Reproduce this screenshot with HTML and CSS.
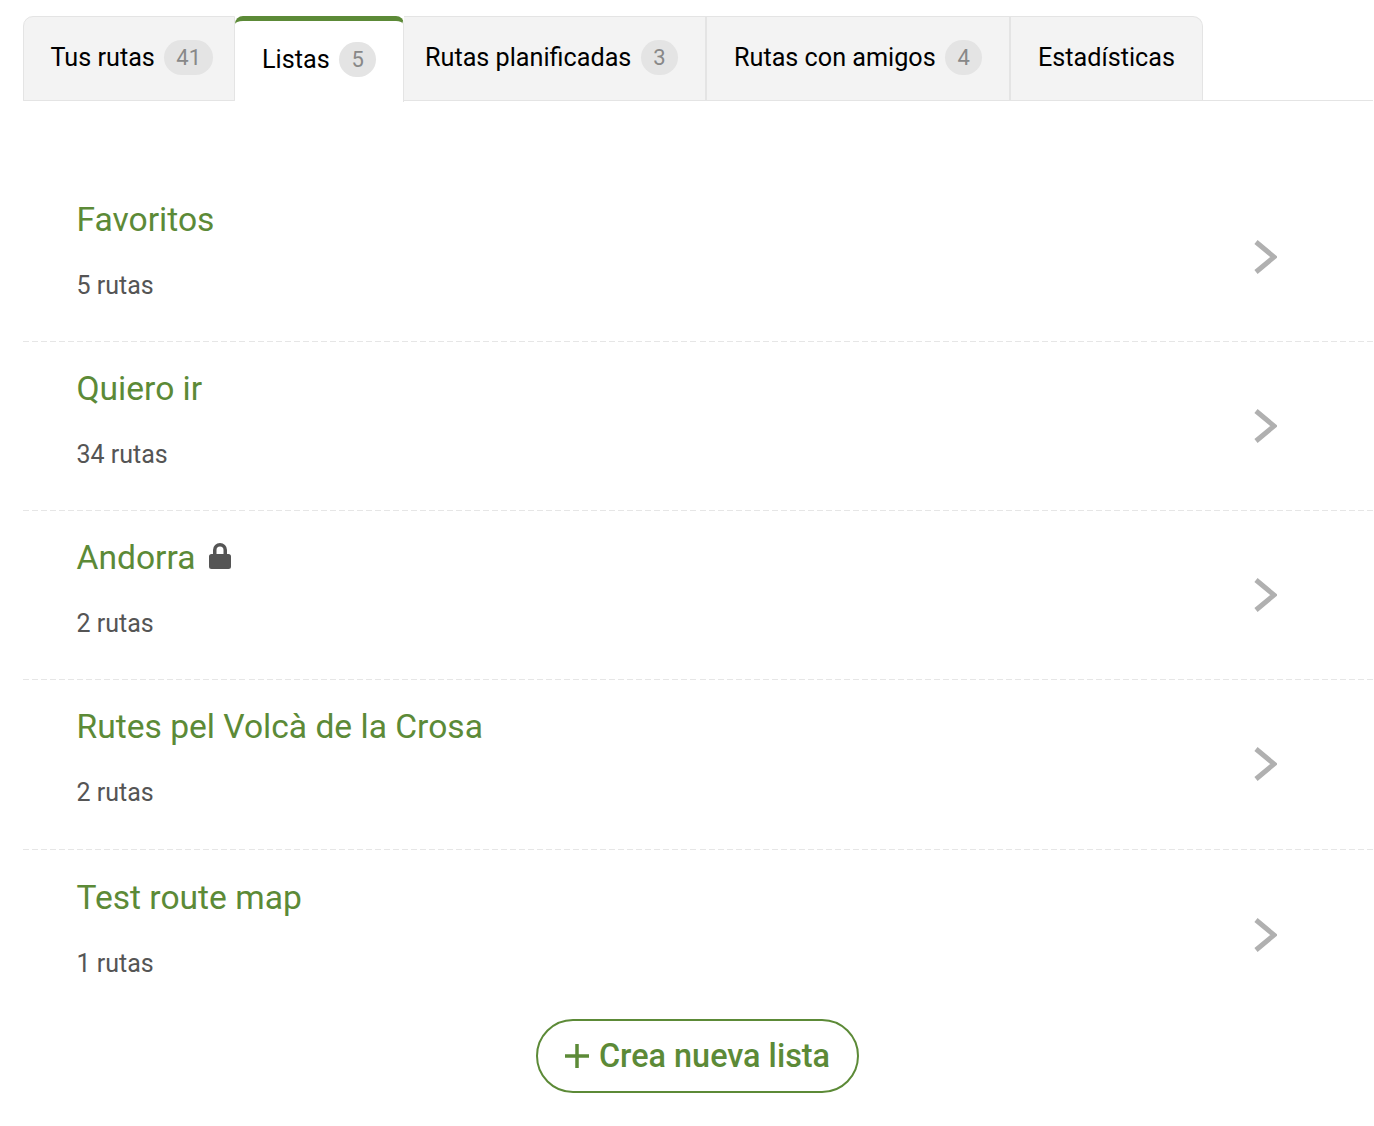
FILE: index.html
```html
<!DOCTYPE html>
<html lang="es">
<head>
  <meta charset="UTF-8" />
  <title>Listas</title>
  <link rel="stylesheet" href="styles.css">
</head>
<body>
  <nav class="tabs">
    <a class="tab">Tus rutas <span class="count">41</span></a>
    <a class="tab active">Listas <span class="count">5</span></a>
    <a class="tab">Rutas planificadas <span class="count">3</span></a>
    <a class="tab">Rutas con amigos <span class="count">4</span></a>
    <a class="tab">Estadísticas</a>
  </nav>

  <ul class="lists">
    <li class="list-row">
      <div class="list-info">
        <h2 class="list-title">Favoritos</h2>
        <p class="list-meta">5 rutas</p>
      </div>
      <svg class="chevron" viewBox="0 0 24 34"><path d="M3 2l18 15L3 32" /></svg>
    </li>
    <li class="list-row">
      <div class="list-info">
        <h2 class="list-title">Quiero ir</h2>
        <p class="list-meta">34 rutas</p>
      </div>
      <svg class="chevron" viewBox="0 0 24 34"><path d="M3 2l18 15L3 32" /></svg>
    </li>
    <li class="list-row">
      <div class="list-info">
        <h2 class="list-title">Andorra
          <svg class="lock" viewBox="0 0 22 27"><path d="M4 12V8a7 7 0 0 1 14 0v4h1.500A2.500 2.500 0 0 1 22 14.500v10a2.500 2.500 0 0 1-2.500 2.500h-17A2.500 2.500 0 0 1 0 24.500v-10A2.500 2.500 0 0 1 2.500 12zM7.500 12h7V8a3.500 3.500 0 0 0-7 0z" /></svg>
        </h2>
        <p class="list-meta">2 rutas</p>
      </div>
      <svg class="chevron" viewBox="0 0 24 34"><path d="M3 2l18 15L3 32" /></svg>
    </li>
    <li class="list-row">
      <div class="list-info">
        <h2 class="list-title">Rutes pel Volcà de la Crosa</h2>
        <p class="list-meta">2 rutas</p>
      </div>
      <svg class="chevron" viewBox="0 0 24 34"><path d="M3 2l18 15L3 32" /></svg>
    </li>
    <li class="list-row">
      <div class="list-info">
        <h2 class="list-title">Test route map</h2>
        <p class="list-meta">1 rutas</p>
      </div>
      <svg class="chevron" viewBox="0 0 24 34"><path d="M3 2l18 15L3 32" /></svg>
    </li>
  </ul>

  <div class="actions">
    <button class="new-list">
      <svg class="plus" viewBox="0 0 24 24"><path d="M12 0v24M0 12h24" /></svg>
      Crea nueva lista
    </button>
  </div>
</body>
</html>
```

FILE: styles.css
```css
body {
  margin: 0;
  padding: 16px 1px 0 23px;
  font-family: 'Roboto', sans-serif;
  background: #fff;
  color: #000;
}

.tabs {
  display: flex;
  height: 85px;
  box-sizing: border-box;
  border-bottom: 1px solid #e4e4e4;
}

.tab {
  display: flex;
  align-items: center;
  gap: 9.5px;
  box-sizing: border-box;
  height: 85px;
  padding: 0 27px 2px;
  font-size: 25.2px;
  white-space: nowrap;
  background: #f3f3f3;
  border: 1px solid #e4e4e4;
  border-left: none;
}

.tab:first-child {
  border-left: 1px solid #e4e4e4;
  border-top-left-radius: 10px;
  width: 212px;
  padding: 0 20px 2px 26.5px;
}

.tab:last-child {
  border-top-right-radius: 10px;
}

.tab.active {
  width: 169px;
  padding: 0 0 5px 27px;
  background: #fff;
  border-top: 5px solid #5c8a37;
  border-bottom: none;
  border-radius: 8px 8px 0 0;
  height: 86px;
}

.tab:nth-child(3) {
  width: 303px;
  padding-left: 21px;
  border-right-width: 2px;
}

.tab:nth-child(4) {
  width: 304px;
  border-right-width: 2px;
}

.count {
  display: inline-block;
  flex: none;
  min-width: 37px;
  box-sizing: border-box;
  padding: 0 12px;
  font-size: 22px;
  line-height: 35px;
  text-align: center;
  color: #888;
  background: #e4e4e4;
  border-radius: 18px;
}

.lists {
  margin: 72px 0 0;
  padding: 0;
  list-style: none;
}

.list-row {
  display: flex;
  justify-content: space-between;
  align-items: center;
  box-sizing: border-box;
  height: 169px;
  padding: 0 96.5px 0 53.5px;
  background: repeating-linear-gradient(to right, #e6e6e6 0 6px, transparent 6px 9.02px) bottom / 100% 1px no-repeat;
}

.list-row:nth-child(4) {
  height: 170px;
}

.list-row:last-child {
  padding-top: 2px;
  background: none;
}

.list-info {
  margin-bottom: 14px;
}

.list-title {
  margin: 0 0 32px;
  font-size: 33.6px;
  line-height: 38px;
  font-weight: 400;
  color: #5c8a37;
}

.list-meta {
  margin: 0;
  font-size: 25px;
  line-height: 30px;
  color: #555;
}

.lock {
  width: 22px;
  height: 27px;
  margin-left: 5px;
  vertical-align: 0;
  fill: #555;
}

.chevron {
  width: 24px;
  height: 34px;
  margin-bottom: 2px;
  fill: none;
  stroke: #b0b0b0;
  stroke-width: 5;
}

.actions {
  display: flex;
  justify-content: center;
}

.new-list {
  display: flex;
  align-items: center;
  justify-content: center;
  gap: 10px;
  height: 74px;
  width: 323px;
  margin-right: 1px;
  font-family: 'Roboto', sans-serif;
  font-size: 32.4px;
  font-weight: 500;
  color: #5c8a37;
  background: #fff;
  border: 2px solid #5c8a37;
  border-radius: 37px;
}

.plus {
  width: 24px;
  height: 24px;
  fill: none;
  stroke: #5c8a37;
  stroke-width: 3.5;
}
```
